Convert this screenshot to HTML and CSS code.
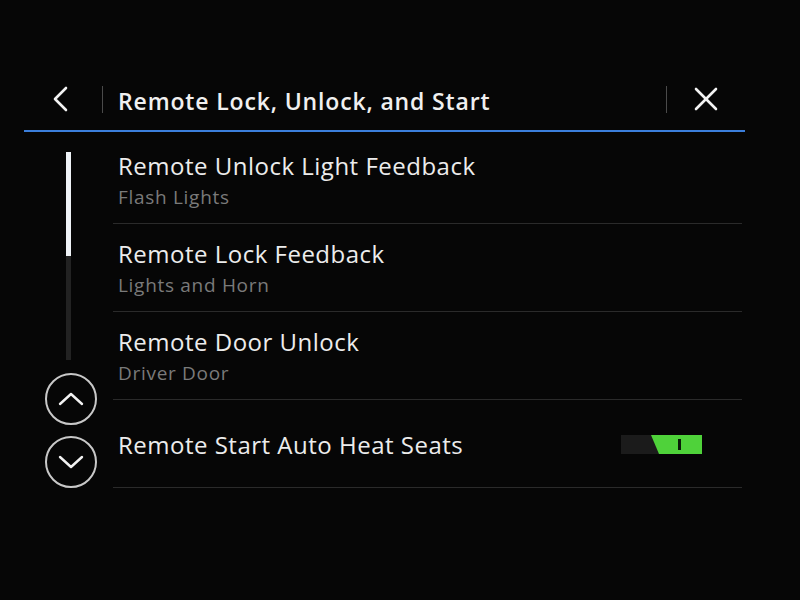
FILE: index.html
```html
<!DOCTYPE html>
<html>
<head>
    <meta charset="utf-8">
    <link rel="stylesheet" href="styles.css">
</head>
<body>
    <div class="screen">
        <div class="header">
            <div class="header-btn back-btn">
                <svg width="20" height="26" viewBox="0 0 20 26">
                    <polyline points="14,2 3,13 14,24" fill="none" stroke="#f2f2f2" stroke-width="2.6" stroke-linecap="round" stroke-linejoin="round"/>
                </svg>
            </div>
            <div class="divider"></div>
            <div class="title">Remote Lock, Unlock, and Start</div>
            <div class="divider"></div>
            <div class="header-btn close-btn">
                <svg width="26" height="26" viewBox="0 0 26 26">
                    <line x1="3" y1="3" x2="23" y2="23" stroke="#f2f2f2" stroke-width="2.6" stroke-linecap="round"/>
                    <line x1="23" y1="3" x2="3" y2="23" stroke="#f2f2f2" stroke-width="2.6" stroke-linecap="round"/>
                </svg>
            </div>
        </div>

        <div class="content">
            <div class="side">
                <div class="scroll-track">
                    <div class="scroll-thumb"></div>
                </div>
                <div class="round-btn">
                    <svg width="26" height="14" viewBox="0 0 26 14">
                        <polyline points="2,12 13,2 24,12" fill="none" stroke="#f2f2f2" stroke-width="2.4" stroke-linecap="round" stroke-linejoin="round"/>
                    </svg>
                </div>
                <div class="round-btn">
                    <svg width="26" height="14" viewBox="0 0 26 14">
                        <polyline points="2,2 13,12 24,2" fill="none" stroke="#f2f2f2" stroke-width="2.4" stroke-linecap="round" stroke-linejoin="round"/>
                    </svg>
                </div>
            </div>

            <div class="list">
                <div class="row">
                    <div class="row-text">
                        <div class="row-title">Remote Unlock Light Feedback</div>
                        <div class="row-sub">Flash Lights</div>
                    </div>
                </div>
                <div class="row">
                    <div class="row-text">
                        <div class="row-title">Remote Lock Feedback</div>
                        <div class="row-sub">Lights and Horn</div>
                    </div>
                </div>
                <div class="row">
                    <div class="row-text">
                        <div class="row-title">Remote Door Unlock</div>
                        <div class="row-sub">Driver Door</div>
                    </div>
                </div>
                <div class="row">
                    <div class="row-text">
                        <div class="row-title">Remote Start Auto Heat Seats</div>
                    </div>
                    <div class="toggle">
                        <svg width="81" height="19" viewBox="0 0 81 19">
                            <rect x="0" y="0" width="40" height="19" fill="#1b1b1b"/>
                            <polygon points="30,0 81,0 81,19 38,19" fill="#4fd23a"/>
                            <rect x="57" y="4" width="3" height="11" fill="#0a1a08"/>
                        </svg>
                    </div>
                </div>
            </div>
        </div>
    </div>
</body>
</html>
```

FILE: styles.css
```css
body {
    margin: 0;
    width: 800px;
    height: 600px;
    background: #060606;
    font-family: "Open Sans", "Noto Sans", sans-serif;
    color: #ececec;
    overflow: hidden;
}

.screen {
    padding: 68px 0 0 24px;
    width: 721px;
}

.header {
    display: flex;
    align-items: center;
    height: 62px;
    border-bottom: 2px solid #3b7edb;
}

.header-btn {
    width: 78px;
    display: flex;
    justify-content: center;
    align-items: center;
}

.back-btn {
    justify-content: flex-start;
    padding-left: 28px;
    width: 50px;
}

.divider {
    width: 1px;
    height: 27px;
    background: #4a4a4a;
}

.title {
    flex: 1;
    padding-left: 15px;
    padding-top: 3px;
    font-size: 23px;
    font-weight: 600;
    letter-spacing: 0.85px;
    color: #f0f0f0;
}

.content {
    display: flex;
    margin-top: 4px;
}

.side {
    width: 89px;
    display: flex;
    flex-direction: column;
    align-items: center;
    padding-top: 16px;
    padding-left: 4px;
    box-sizing: border-box;
}

.scroll-track {
    width: 5px;
    height: 208px;
    background: #222;
    margin-left: -4px;
    margin-bottom: 13px;
}

.scroll-thumb {
    height: 104px;
    background: #eef2f6;
}

.round-btn {
    width: 48px;
    height: 48px;
    border: 2px solid #c8c8c8;
    border-radius: 50%;
    display: flex;
    justify-content: center;
    align-items: center;
    margin-bottom: 11px;
}

.list {
    width: 629px;
}

.row {
    height: 87px;
    border-bottom: 1px solid #2a2a2a;
    display: flex;
    align-items: center;
    padding-left: 5px;
}

.row-text {
    flex: 1;
    padding-top: 2px;
}

.row-title {
    font-size: 24px;
    line-height: 30px;
    letter-spacing: 0.5px;
    color: #ececec;
}

.row-sub {
    font-size: 19px;
    line-height: 26px;
    margin-top: 3px;
    letter-spacing: 0.7px;
    color: #7a7a7a;
}

.toggle {
    margin-right: 40px;
    display: flex;
    margin-top: 2px;
}
```
